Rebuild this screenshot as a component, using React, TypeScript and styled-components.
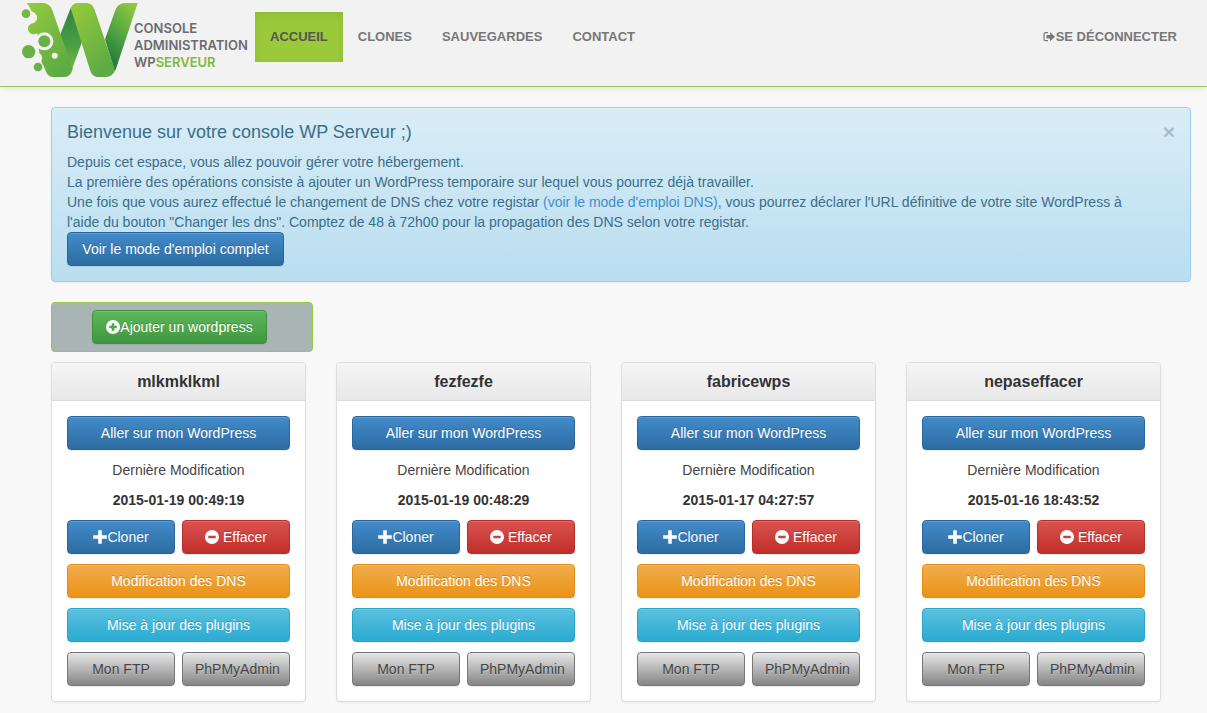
import React from "react";
import styled, { createGlobalStyle, css } from "styled-components";

const GlobalStyle = createGlobalStyle`
  *, *::before, *::after { box-sizing: border-box; }
  body {
    margin: 0;
    background: #f8f8f8;
    color: #333;
    font: 14px/20px "Liberation Sans", Arial, sans-serif;
  }
`;

const Header = styled.header`
  display: flex;
  align-items: flex-start;
  height: 87px;
  padding: 0 15px 0 22px;
  background: #f2f2f2;
  border-bottom: 1px solid #9cc066;
  box-shadow: 0 1px 6px rgba(160, 220, 80, 0.4);
`;

const Brand = styled.a`
  display: flex;
  width: 233px;
  padding-top: 3px;
  flex: none;
  color: #6a6b6e;
  text-decoration: none;
`;

const BrandMark = styled.svg`
  flex: none;
  width: 112px;
  height: 74px;
  overflow: visible;
`;

const BrandText = styled.span`
  padding-top: 17px;
  font: 600 13px/17px Inter, "Liberation Sans", sans-serif;
  white-space: nowrap;
`;

const BrandLine = styled.span`
  display: block;
`;

const Accent = styled.span`
  color: #7fb93f;
`;

const Nav = styled.nav`
  display: flex;
  flex: 1;
  padding-top: 12px;
`;

const NavLink = styled.a<{ $active?: boolean; $end?: boolean }>`
  display: flex;
  align-items: center;
  height: 50px;
  padding: 0 15px;
  color: #777;
  font-size: 13px;
  font-weight: bold;
  text-decoration: none;
  white-space: nowrap;
  ${(p) => p.$end && css`margin-left: auto;`}
  ${(p) =>
    p.$active &&
    css`
      color: #555;
      background: #9aca3a;
      box-shadow: inset 0 3px 9px rgba(0, 0, 0, 0.075);
    `}
`;

const Icon = styled.svg`
  flex: none;
  width: 14px;
  height: 14px;
  fill: currentColor;
`;

const Main = styled.main`
  padding: 20px 16px 10px 51px;
`;

const Welcome = styled.section`
  padding: 15px;
  color: #3a6d88;
  background: linear-gradient(#d9edf7, #b9def0);
  border: 1px solid #9acfea;
  border-radius: 4px;
  box-shadow: inset 0 1px 0 rgba(255, 255, 255, 0.25), 0 1px 2px rgba(0, 0, 0, 0.05);
  text-shadow: 0 1px 0 rgba(255, 255, 255, 0.2);
`;

const WelcomeHead = styled.div`
  display: flex;
  justify-content: space-between;
  margin-bottom: 11px;
`;

const WelcomeTitle = styled.h1`
  margin: 0;
  font-size: 18px;
  font-weight: normal;
  line-height: 18px;
`;

const Close = styled.button`
  height: 18px;
  padding: 0;
  border: 0;
  background: none;
  color: #000;
  opacity: 0.2;
  font: bold 21px/16px "Liberation Sans", Arial, sans-serif;
  text-shadow: 0 1px 0 #fff;
`;

const WelcomeText = styled.p`
  margin: 0;
  padding-right: 20px;
`;

const TextLink = styled.a`
  color: #428bca;
  text-decoration: none;
`;

const tones = {
  primary: ["#428bca", "#2d6ca2", "#2b669a", "#fff"],
  success: ["#5cb85c", "#419641", "#3e8f3e", "#fff"],
  danger: ["#d9534f", "#c12e2a", "#b92c28", "#fff"],
  warning: ["#f0ad4e", "#eb9316", "#e38d13", "#fff"],
  info: ["#5bc0de", "#2aabd2", "#28a4c9", "#fff"],
  neutral: ["#e6e6e6", "#858585", "#777", "#444"],
};

const Button = styled.button<{ $tone: keyof typeof tones; $gap?: number; $min?: number }>`
  display: flex;
  align-items: center;
  justify-content: safe center;
  gap: ${(p) => p.$gap ?? 0}px;
  min-width: ${(p) => p.$min ?? 0}px;
  height: 34px;
  padding: 0 12px;
  color: ${(p) => tones[p.$tone][3]};
  background: linear-gradient(${(p) => tones[p.$tone][0]}, ${(p) => tones[p.$tone][1]});
  border: 1px solid ${(p) => tones[p.$tone][2]};
  border-radius: 4px;
  box-shadow: inset 0 1px 0 rgba(255, 255, 255, 0.15), 0 1px 1px rgba(0, 0, 0, 0.075);
  font: inherit;
  text-shadow: ${(p) => (p.$tone === "neutral" ? "0 1px 0 rgba(255, 255, 255, 0.3)" : "0 -1px 0 rgba(0, 0, 0, 0.2)")};
  white-space: nowrap;
`;

const AddBar = styled.div`
  display: flex;
  width: 23%;
  min-width: 262px;
  height: 50px;
  margin: 20px 0 10px;
  padding: 7px 40px;
  background: #a9b5b5;
  border: 1px solid #9aca3a;
  border-radius: 4px;
`;

const Sites = styled.div`
  display: grid;
  grid-template-columns: repeat(4, 1fr);
  gap: 30px;
  padding-right: 30px;
`;

const Card = styled.article`
  min-width: 0;
  background: #fff;
  border: 1px solid #ddd;
  border-radius: 4px;
  box-shadow: 0 1px 2px rgba(0, 0, 0, 0.05);
  text-align: center;
`;

const CardTitle = styled.h2`
  margin: 0;
  padding: 10px 15px;
  background: linear-gradient(#f5f5f5, #e8e8e8);
  border-bottom: 1px solid #ddd;
  border-radius: 3px 3px 0 0;
  font-size: 16px;
  line-height: 17px;
`;

const CardBody = styled.div`
  display: grid;
  gap: 10px;
  padding: 15px;
`;

const Pair = styled.div`
  display: grid;
  grid-template-columns: repeat(2, minmax(0, 1fr));
  gap: 7px;
`;

const Caption = styled.span`
  color: #444;
`;

const Stamp = styled.time`
  font-weight: bold;
`;

const sites = [
  { name: "mlkmklkml", modified: "2015-01-19 00:49:19" },
  { name: "fezfezfe", modified: "2015-01-19 00:48:29" },
  { name: "fabricewps", modified: "2015-01-17 04:27:57" },
  { name: "nepaseffacer", modified: "2015-01-16 18:43:52" },
];

function Logo() {
  return (
    <BrandMark viewBox="66 9 336 222" aria-hidden="true">
      <defs>
        <linearGradient id="light" x1="0" y1="0" x2="0.6" y2="1">
          <stop offset="0" stopColor="#98cb3c" />
          <stop offset="1" stopColor="#5dab44" />
        </linearGradient>
        <linearGradient id="dark" x1="0" y1="0" x2="0" y2="1">
          <stop offset="0" stopColor="#2d8540" />
          <stop offset="0.6" stopColor="#4c9f43" />
          <stop offset="1" stopColor="#78bc42" />
        </linearGradient>
        <linearGradient id="last" x1="0.7" y1="0" x2="0.3" y2="0.85">
          <stop offset="0" stopColor="#8ac640" />
          <stop offset="0.5" stopColor="#58a944" />
          <stop offset="1" stopColor="#28803c" />
        </linearGradient>
      </defs>
      <path fill="url(#dark)" d="M213 22 L248 120 L213 216 L178 110Z" />
      <path fill="url(#last)" d="M413 9 H376 Q354 9 346 30 L315 118 L344 214 Q348 208 350 200Z" />
      <path
        fill="url(#light)"
        d="M80 9 H131 Q150 11 157 31 L218 207 Q211 231 194 231 H160 Q144 230 138 215 L131 197 Q122 188 126 176 Q128 166 118 160 L112 100 Q98 106 89 98 Q80 88 86 77 Q92 70 103 68 Q113 60 111 48 Q106 37 94 33 Q90 21 80 9Z"
      />
      <path fill="url(#light)" d="M212 24 Q219 9 232 9 H262 Q278 11 284 29 L345 211 Q338 231 318 231 H291 Q276 228 271 213Z" />
      <circle cx="133" cy="124" r="27" fill="#f2f2f2" />
      <circle cx="164" cy="167" r="9" fill="#f2f2f2" />
      <circle cx="78" cy="41" r="13" fill="#78b744" />
      <circle cx="133" cy="124" r="18" fill="#69b045" />
      <circle cx="86" cy="155" r="20" fill="#69b045" />
      <circle cx="114" cy="201" r="13" fill="#69b045" />
    </BrandMark>
  );
}

const PlusCircle = () => (
  <Icon viewBox="0 0 14 14" aria-hidden="true">
    <path fillRule="evenodd" d="M7 0a7 7 0 1 0 0 14A7 7 0 0 0 7 0ZM5.7 3.2h2.6v2.5h2.5v2.6H8.3v2.5H5.7V8.3H3.2V5.7h2.5Z" />
  </Icon>
);

const MinusCircle = () => (
  <Icon viewBox="0 0 14 14" aria-hidden="true">
    <path fillRule="evenodd" d="M7 0a7 7 0 1 0 0 14A7 7 0 0 0 7 0ZM3.3 5.8h7.4v2.5H3.3Z" />
  </Icon>
);

const Plus = () => (
  <Icon viewBox="0 0 14 14" aria-hidden="true">
    <path d="M5.2.2h3.6v5h5v3.6h-5v5H5.2v-5h-5V5.2h5Z" />
  </Icon>
);

const SignOut = () => (
  <Icon viewBox="0 0 14 14" aria-hidden="true">
    <path d="M6 2.7H3.5A1.5 1.5 0 0 0 2 4.2v5A1.5 1.5 0 0 0 3.5 10.7H6" fill="none" stroke="currentColor" strokeWidth="1.2" />
    <path d="M4.5 5H8V2.2L13 6.7l-5 4.5V8.4H4.5Z" />
  </Icon>
);

export default function App() {
  return (
    <>
      <GlobalStyle />
      <Header>
        <Brand href="#">
          <Logo />
          <BrandText>
            <BrandLine>CONSOLE</BrandLine>
            <BrandLine>ADMINISTRATION</BrandLine>
            <BrandLine>WP<Accent>SERVEUR</Accent></BrandLine>
          </BrandText>
        </Brand>
        <Nav>
          <NavLink href="#" $active>ACCUEIL</NavLink>
          <NavLink href="#clones">CLONES</NavLink>
          <NavLink href="#sauvegardes">SAUVEGARDES</NavLink>
          <NavLink href="#contact">CONTACT</NavLink>
          <NavLink href="#logout" $end><SignOut />SE DÉCONNECTER</NavLink>
        </Nav>
      </Header>
      <Main>
        <Welcome>
          <WelcomeHead>
            <WelcomeTitle>Bienvenue sur votre console WP Serveur ;)</WelcomeTitle>
            <Close type="button" aria-label="Fermer">×</Close>
          </WelcomeHead>
          <WelcomeText>
            Depuis cet espace, vous allez pouvoir gérer votre hébergement.<br />
            La première des opérations consiste à ajouter un WordPress temporaire sur lequel vous pourrez déjà travailler.<br />
            Une fois que vous aurez effectué le changement de DNS chez votre registar{" "}
            <TextLink href="#dns">(voir le mode d'emploi DNS)</TextLink>, vous pourrez déclarer l'URL définitive de votre site WordPress à l'aide du bouton "Changer les dns". Comptez de 48 à 72h00 pour la propagation des DNS selon votre registar.
          </WelcomeText>
          <Button type="button" $tone="primary" $min={217}>Voir le mode d'emploi complet</Button>
        </Welcome>
        <AddBar>
          <Button type="button" $tone="success" $min={175}><PlusCircle />Ajouter un wordpress</Button>
        </AddBar>
        <Sites>
          {sites.map((site) => (
            <Card key={site.name}>
              <CardTitle>{site.name}</CardTitle>
              <CardBody>
                <Button type="button" $tone="primary">Aller sur mon WordPress</Button>
                <Caption>Dernière Modification</Caption>
                <Stamp>{site.modified}</Stamp>
                <Pair>
                  <Button type="button" $tone="primary"><Plus />Cloner</Button>
                  <Button type="button" $tone="danger" $gap={4}><MinusCircle />Effacer</Button>
                </Pair>
                <Button type="button" $tone="warning">Modification des DNS</Button>
                <Button type="button" $tone="info">Mise à jour des plugins</Button>
                <Pair>
                  <Button type="button" $tone="neutral">Mon FTP</Button>
                  <Button type="button" $tone="neutral">PhPMyAdmin</Button>
                </Pair>
              </CardBody>
            </Card>
          ))}
        </Sites>
      </Main>
    </>
  );
}
